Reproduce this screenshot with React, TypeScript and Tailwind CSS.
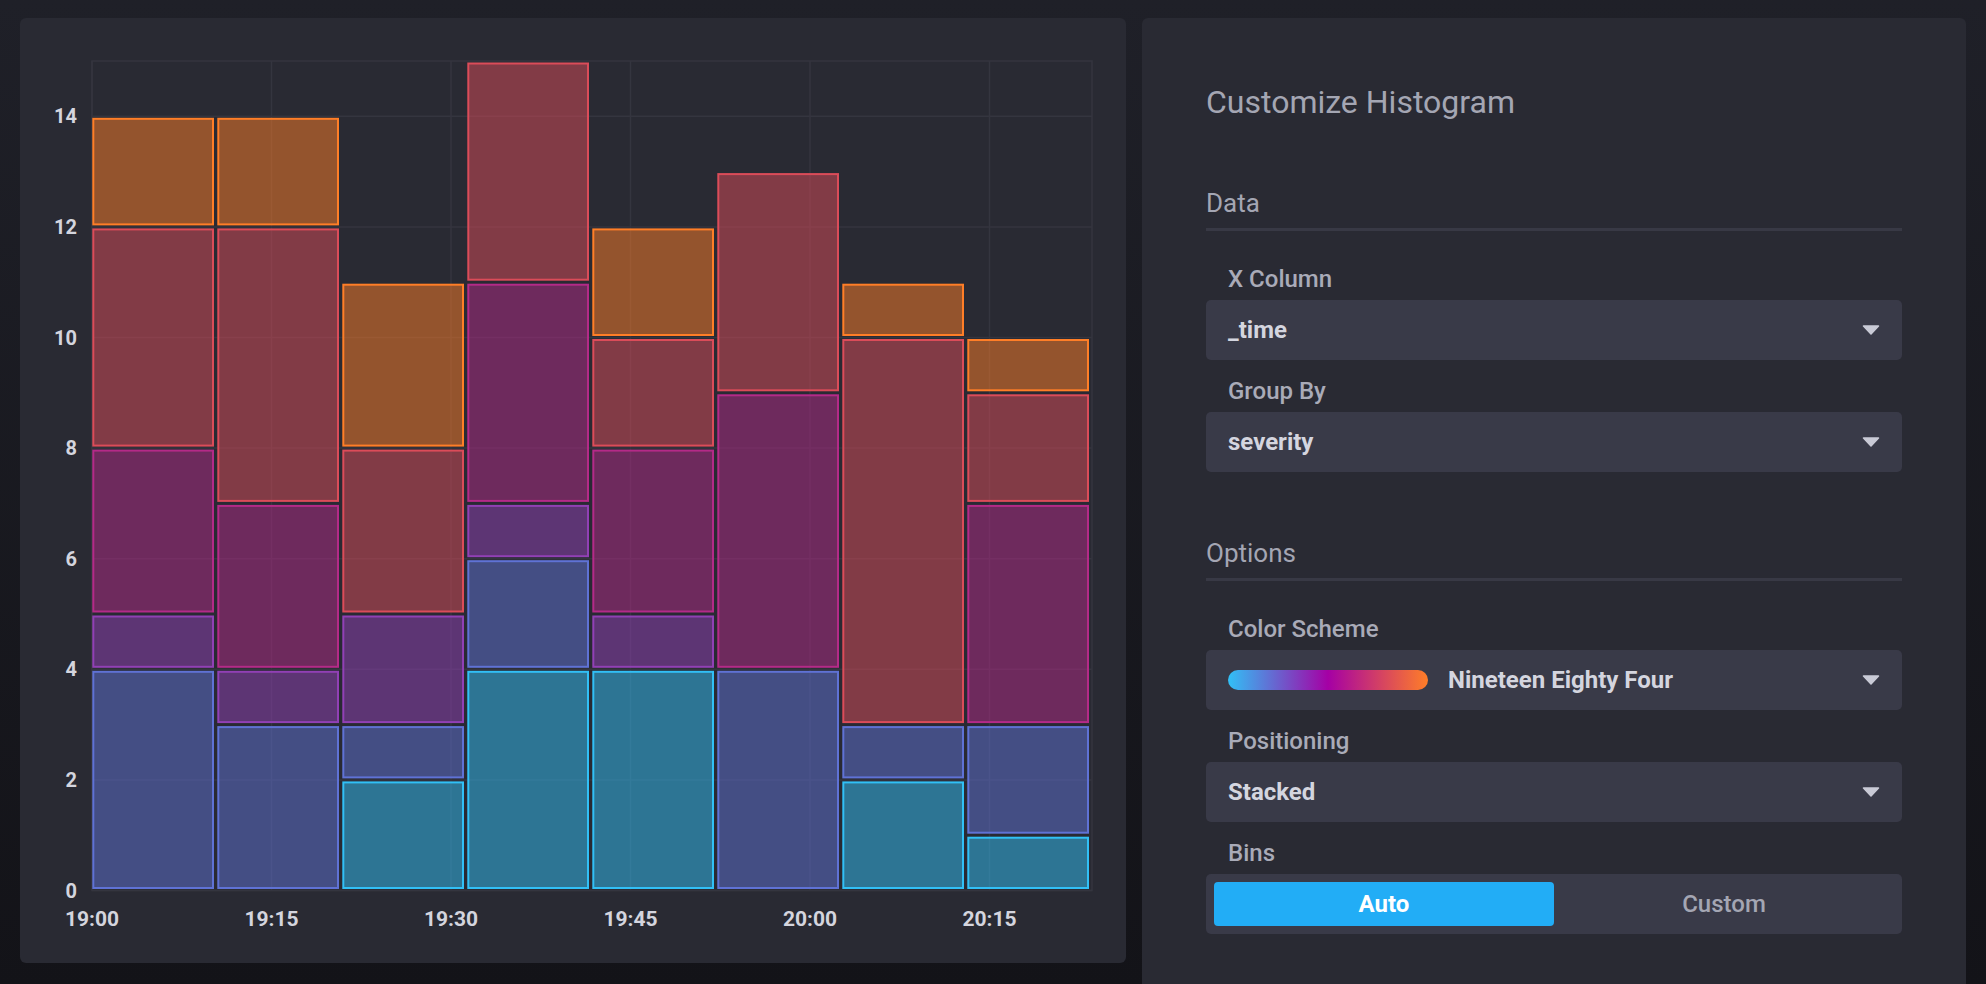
import type { ReactNode } from "react";

// severity groups, low -> high, sampled from the Nineteen Eighty Four scheme
const GROUP_COLORS = ["#31c0f6", "#5f72d5", "#9140b5", "#b42a88", "#db4c59", "#ff7e27"];

// counts per bin, one entry per severity group
const BINS = [
  [0, 4, 1, 3, 4, 2],
  [0, 3, 1, 3, 5, 2],
  [2, 1, 2, 0, 3, 3],
  [4, 2, 1, 4, 4, 0],
  [4, 0, 1, 3, 2, 2],
  [0, 4, 0, 5, 4, 0],
  [2, 1, 0, 0, 7, 1],
  [1, 2, 0, 4, 2, 1],
];

const X_TICKS: [string, number][] = [
  ["19:00", 72],
  ["19:15", 251.5],
  ["19:30", 431],
  ["19:45", 610.5],
  ["20:00", 790],
  ["20:15", 969.5],
];

const Y_TICKS = [0, 2, 4, 6, 8, 10, 12, 14];

const PLOT_LEFT = 72;
const PLOT_RIGHT = 1072;
const PLOT_TOP = 43;
const PLOT_BOTTOM = 872.5;
const UNIT = 55.3;
const BIN_WIDTH = 125;

const yOf = (v: number) => PLOT_BOTTOM - UNIT * v;

function Histogram() {
  const rects: ReactNode[] = [];
  BINS.forEach((counts, i) => {
    const x = PLOT_LEFT + i * BIN_WIDTH;
    let base = 0;
    counts.forEach((count, g) => {
      if (count === 0) return;
      const top = base + count;
      const y1 = yOf(top) + 1.5;
      const y2 = yOf(base) - 1.5;
      rects.push(
        <rect
          key={`${i}-${g}`}
          x={x + 1.3}
          y={y1 + 1}
          width={119.7}
          height={y2 - y1 - 2}
          fill={GROUP_COLORS[g]}
          fillOpacity={0.5}
          stroke={GROUP_COLORS[g]}
          strokeWidth={2}
        />
      );
      base = top;
    });
  });

  return (
    <svg width={1106} height={945} className="block [font-family:Roboto,sans-serif]">
      {Y_TICKS.map((v) => (
        <line key={`h${v}`} x1={PLOT_LEFT} x2={PLOT_RIGHT} y1={yOf(v)} y2={yOf(v)} stroke="#34353f" strokeWidth={1.5} />
      ))}
      {X_TICKS.map(([label, x]) => (
        <line key={`v${label}`} x1={x} x2={x} y1={PLOT_TOP} y2={PLOT_BOTTOM} stroke="#34353f" strokeWidth={1.5} />
      ))}
      <rect
        x={PLOT_LEFT}
        y={PLOT_TOP}
        width={PLOT_RIGHT - PLOT_LEFT}
        height={PLOT_BOTTOM - PLOT_TOP}
        fill="none"
        stroke="#34353f"
        strokeWidth={1.5}
      />
      {rects}
      {Y_TICKS.map((v) => (
        <text key={`yl${v}`} x={57} y={yOf(v) + 7} textAnchor="end" fontSize={20} fontWeight={700} fill="#d4d5de">
          {v}
        </text>
      ))}
      {X_TICKS.map(([label, x]) => (
        <text key={`xl${label}`} x={x} y={908} textAnchor="middle" fontSize={21} fontWeight={700} fill="#d4d5de">
          {label}
        </text>
      ))}
    </svg>
  );
}

function Caret() {
  return (
    <svg width={18} height={10} viewBox="0 0 18 10" aria-hidden="true">
      <path d="M1.5 1 H16.5 L9 9 Z" fill="#c9cad6" stroke="#c9cad6" strokeWidth={1.5} strokeLinejoin="round" />
    </svg>
  );
}

function Field({ label, children }: { label: string; children: ReactNode }) {
  return (
    <div>
      <div className="pt-[15px] pb-[5px] pl-[22px] text-[24px] leading-[32px] font-medium text-[#a9abb8]">{label}</div>
      {children}
    </div>
  );
}

function Select({ children }: { children: ReactNode }) {
  return (
    <div className="flex h-[60px] items-center justify-between rounded-[5px] bg-[#393a48] pl-[22px] pr-[22px]">
      <div className="flex items-center gap-5 text-[24px] font-bold text-[#d4d5df]">{children}</div>
      <Caret />
    </div>
  );
}

function Section({ title, children }: { title: string; children: ReactNode }) {
  return (
    <section className="mt-16">
      <h3 className="mb-2 text-[26px] leading-[34px] text-[#a4a6b3]">{title}</h3>
      <div className="h-[3px] bg-[#383945]" />
      <div className="pt-[17px]">{children}</div>
    </section>
  );
}

export default function App() {
  return (
    <div className="flex h-[984px] w-[1986px] items-start gap-4 overflow-hidden bg-linear-to-b from-[#1f2028] to-[#131318] px-5 pt-[18px] [font-family:Roboto,sans-serif]">
      <div className="h-[945px] w-[1106px] shrink-0 rounded-md bg-[#292a33]">
        <Histogram />
      </div>

      <div className="h-[1000px] flex-1 rounded-md bg-[#292a33] px-16 pt-16">
        <h2 className="text-[32px] leading-[40px] text-[#a4a6b3]">Customize Histogram</h2>

        <Section title="Data">
          <Field label="X Column">
            <Select>_time</Select>
          </Field>
          <Field label="Group By">
            <Select>severity</Select>
          </Field>
        </Section>

        <Section title="Options">
          <Field label="Color Scheme">
            <Select>
              <span className="h-5 w-[200px] rounded-full bg-[linear-gradient(to_right,#31c0f6,#a500a5,#ff7e27)]" />
              <span>Nineteen Eighty Four</span>
            </Select>
          </Field>
          <Field label="Positioning">
            <Select>Stacked</Select>
          </Field>
          <Field label="Bins">
            <div className="flex h-[60px] rounded-[5px] bg-[#393a48] p-2">
              <button type="button" className="flex flex-1 items-center justify-center rounded-[4px] bg-[#22adf6] text-[24px] font-bold text-white">
                Auto
              </button>
              <button type="button" className="flex flex-1 items-center justify-center text-[24px] font-medium text-[#a4a6b3]">
                Custom
              </button>
            </div>
          </Field>
        </Section>
      </div>
    </div>
  );
}
